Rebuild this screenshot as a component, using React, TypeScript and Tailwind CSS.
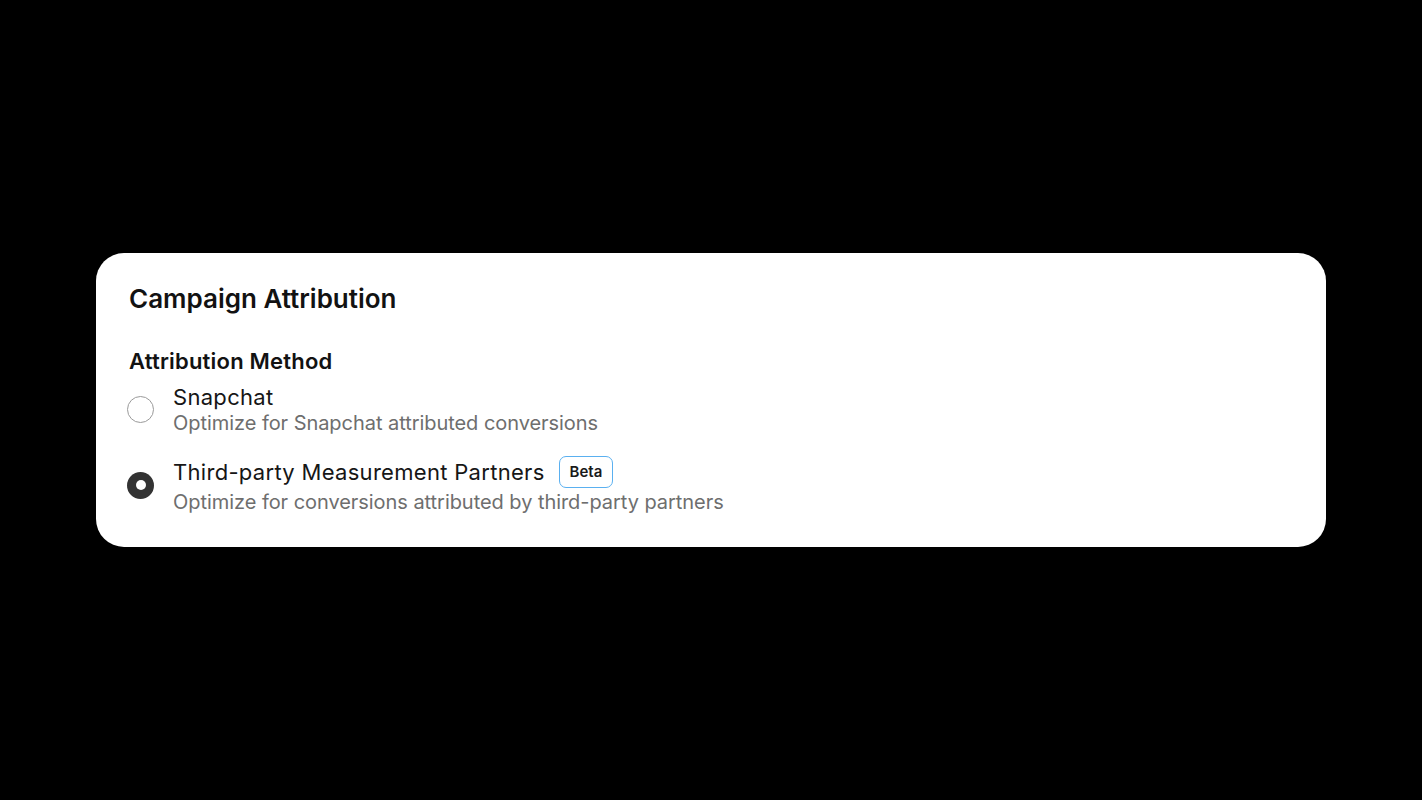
import React from "react";

type Option = {
  id: string;
  label: string;
  description: string;
  badge?: string;
};

const options: Option[] = [
  {
    id: "snapchat",
    label: "Snapchat",
    description: "Optimize for Snapchat attributed conversions",
  },
  {
    id: "third-party",
    label: "Third-party Measurement Partners",
    description: "Optimize for conversions attributed by third-party partners",
    badge: "Beta",
  },
];

function Radio({ checked }: { checked: boolean }) {
  if (checked) {
    return (
      <span className="-ml-[2px] flex h-[27px] w-[27px] shrink-0 items-center justify-center rounded-full bg-[#333333]">
        <span className="h-[10px] w-[10px] rounded-full bg-white" />
      </span>
    );
  }
  return <span className="-ml-[2px] h-[27px] w-[27px] shrink-0 rounded-full border-[1.5px] border-[#9a9a9a] bg-white" />;
}

export default function App() {
  const selected = "third-party";

  return (
    <div className="flex h-screen w-full items-center justify-center bg-black font-['Inter','Liberation_Sans',sans-serif]">
      <div className="w-[1230px] rounded-[28px] bg-white pl-[33px] pr-8 pt-[30px] pb-[33px]">
        <h2 className="text-[26px] leading-[32px] font-semibold text-[#121212]">Campaign Attribution</h2>
        <h3 className="mt-[32px] text-[22px] leading-[28px] font-semibold tracking-[0.2px] text-[#121212]">
          Attribution Method
        </h3>
        <div className="mt-[9px] flex flex-col gap-[21px]">
          {options.map((opt) => (
            <label key={opt.id} className="flex cursor-pointer items-center gap-[19px]">
              <Radio checked={opt.id === selected} />
              <div className="flex flex-col">
                <div className="flex items-center gap-[14px]">
                  <span className={`text-[22px] tracking-[0.3px] text-[#161616] ${opt.badge ? "leading-[32px]" : "leading-[26px]"}`}>
                    {opt.label}
                  </span>
                  {opt.badge && (
                    <span className="flex h-[32px] items-center rounded-[7px] border-[1.5px] border-[#5ab0f0] px-[10px] text-[15px] font-semibold text-[#1a1a1a]">
                      {opt.badge}
                    </span>
                  )}
                </div>
                <span className={`text-[20px] leading-[24px] tracking-[-0.05px] text-[#6e6e6e] ${opt.badge ? "mt-[2px]" : "mt-[1px]"}`}>
                  {opt.description}
                </span>
              </div>
            </label>
          ))}
        </div>
      </div>
    </div>
  );
}
